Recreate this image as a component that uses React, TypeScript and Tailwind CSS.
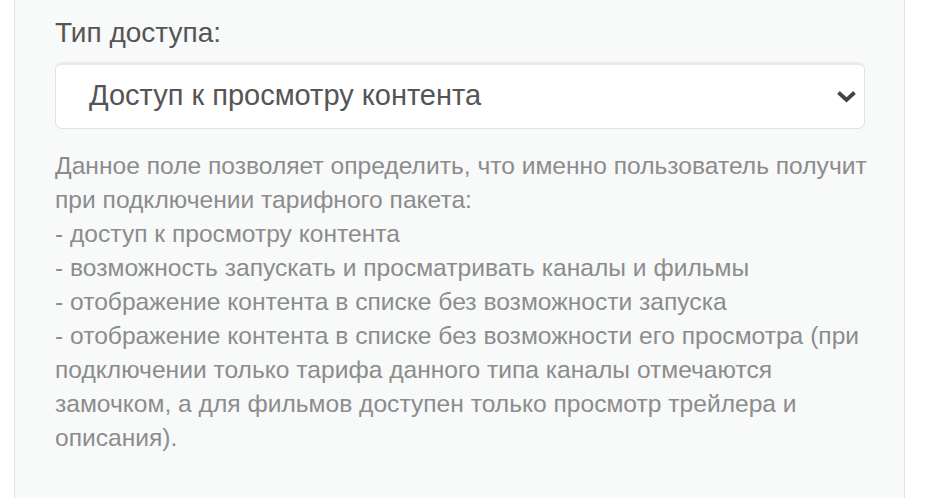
export default function App() {
  return (
    <div className="min-h-screen bg-white font-['Liberation_Sans',Arial,sans-serif]">
      <div className="ml-[14px] w-[891px] h-[498px] overflow-hidden border-x border-[#dde2e8] bg-[#f8f9f9] pl-[40px] pr-[39px] pt-[17px]">
        <label className="block text-[28px] leading-[32px] text-[#555555]">Тип доступа:</label>
        <div className="relative mt-[13px] h-[67px] rounded-[7px] border border-[#e2e2e2] border-t-[3px] border-t-[#e9e9e9] bg-white">
          <div className="flex h-full items-center pl-[33px] pb-[2px] text-[29px] text-[#555555]">
            Доступ к просмотру контента
          </div>
          <svg
            className="absolute right-[7px] top-[25px] h-[13px] w-[21px]"
            viewBox="0 0 21 13"
            fill="none"
          >
            <path d="M2.5 2.5 L10.5 10 L18.5 2.5" stroke="#444" strokeWidth="3.8" />
          </svg>
        </div>
        <p className="mt-[20px] whitespace-nowrap text-[24.6px] leading-[34px] text-[#8c8c8c]">
          Данное поле позволяет определить, что именно пользователь получит
          <br />
          при подключении тарифного пакета:
          <br />- доступ к просмотру контента
          <br />- возможность запускать и просматривать каналы и фильмы
          <br />- отображение контента в списке без возможности запуска
          <br />- отображение контента в списке без возможности его просмотра (при
          <br />
          подключении только тарифа данного типа каналы отмечаются
          <br />
          замочком, а для фильмов доступен только просмотр трейлера и
          <br />
          описания).
        </p>
      </div>
    </div>
  );
}
